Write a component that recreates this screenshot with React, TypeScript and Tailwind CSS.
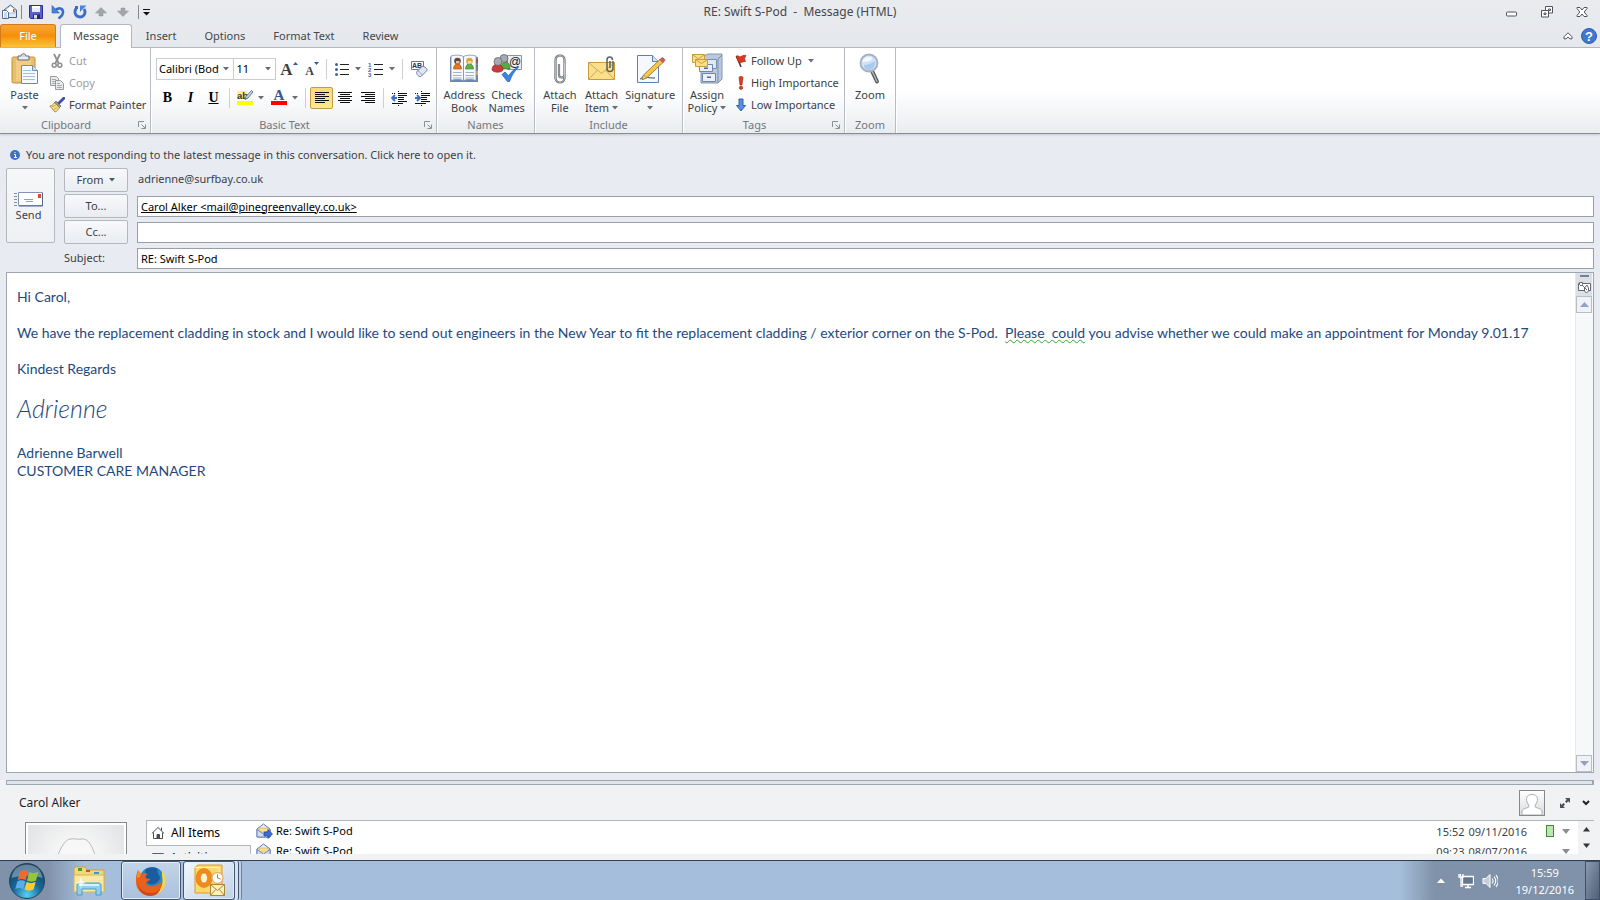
import React, { ReactNode } from "react";

const Caret = ({ className = "text-[#6a6e74]" }: { className?: string }) => (
  <svg width="6" height="4" viewBox="0 0 6 4" className={`shrink-0 ${className}`}>
    <path d="M0 0h6L3 3.5z" fill="currentColor" />
  </svg>
);

/* ---------- Quick access icons ---------- */
const MailDoc = () => (
  <svg width="17" height="16" viewBox="0 0 17 16">
    <path d="M3 6L9.500 1 15.500 6v7.500H3z" fill="#dfe8f4" stroke="#4c5f80" />
    <path d="M5 5l4.500-3L14 5v4H5z" fill="#fff" stroke="#8fa1bd" strokeWidth=".7" />
    <path d="M12 5h1.500v3H12z" fill="#e0532b" />
    <path d="M1.500 6.500h4l2 2v6h-6z" fill="#fff" stroke="#56698b" />
    <path d="M3 9h3M3 11h3M3 13h3" stroke="#7b9cc8" strokeWidth=".8" />
  </svg>
);
const Save = () => (
  <svg width="16" height="16" viewBox="0 0 16 16">
    <path d="M1.500 1.500h13v13h-12l-1-1z" fill="#5a60cc" stroke="#2e2f8d" />
    <path d="M4 2h8v6H4z" fill="#e6ecfa" />
    <path d="M4 2h8v2H4z" fill="#fff" />
    <path d="M5 10.500h7V15H5z" fill="#28286e" />
    <path d="M6 11h3v3.500H6z" fill="#d9ddf0" />
  </svg>
);
const Undo = () => (
  <svg width="16" height="16" viewBox="0 0 16 16">
    <path d="M5 6.500c3-3.500 8-2.500 8 1.500 0 2.500-1.500 4.500-4.500 6.500" fill="none" stroke="#3a6cc8" strokeWidth="2.600" />
    <path d="M2 1.500V9h7.500z" fill="#4b82dc" stroke="#2b5bb4" strokeWidth=".6" />
  </svg>
);
const Redo = () => (
  <svg width="16" height="16" viewBox="0 0 16 16">
    <path d="M4 4.500C1.500 9 4 13 8 13s6.500-4.500 4-8" fill="none" stroke="#3a6cc8" strokeWidth="2.800" />
    <path d="M8 1.500h6.500L8 8z" fill="#4b82dc" />
    <path d="M3 2h3v3H3z" fill="#3a6cc8" />
  </svg>
);
const GreyArrow = ({ down = false }: { down?: boolean }) => (
  <svg width="12" height="10" viewBox="0 0 12 10" className={down ? "rotate-180" : ""}>
    <path d="M6 .5L11.500 6H8v3H4V6H.5z" fill="#a3a5a9" stroke="#8e9196" strokeWidth=".5" />
  </svg>
);

/* ---------- Ribbon icons ---------- */
const PasteIcon = () => (
  <svg width="28" height="32" viewBox="0 0 28 32">
    <rect x="1" y="4" width="23" height="26" rx="1.500" fill="#eabf6c" stroke="#c08e3c" />
    <path d="M5 7h15v21H5z" fill="#f0cc84" />
    <path d="M7 3h3c0-3 5-3 5 0h3v4H7z" fill="#d5d9de" stroke="#6d737b" />
    <path d="M8 5h9" stroke="#fff" />
    <path d="M10.500 12.500h11l5 5v13h-16z" fill="#f6f9fd" stroke="#7188ad" />
    <path d="M21.500 12.500v5h5" fill="#d5e2f2" stroke="#7188ad" />
    <path d="M12 17.500h8M12 20.500h12M12 23.500h12M12 26.500h12" stroke="#a9bdd8" />
  </svg>
);
const CutIcon = () => (
  <svg width="16" height="16" viewBox="0 0 16 16" fill="none" stroke="#8c8e91">
    <path d="M5 1l4.500 9M11 1L6.500 10" strokeWidth="1.800" />
    <circle cx="5.200" cy="12.300" r="2" strokeWidth="1.500" />
    <circle cx="10.800" cy="12.300" r="2" strokeWidth="1.500" />
  </svg>
);
const CopyIcon = () => (
  <svg width="16" height="16" viewBox="0 0 16 16" fill="#e9eaeb" stroke="#97999c">
    <path d="M1.500 1.500h6l2 2v7h-8z" />
    <path d="M3 4.500h4M3 6.500h4M3 8.500h3" strokeWidth=".8" />
    <path d="M6.500 5.500h5l3 3v6h-8z" />
    <path d="M8 8.500h3M8 10.500h5M8 12.500h5" strokeWidth=".8" />
  </svg>
);
const PainterIcon = () => (
  <svg width="16" height="16" viewBox="0 0 16 16">
    <path d="M14.800 1.200L10 6" stroke="#4a49a8" strokeWidth="2.800" strokeLinecap="round" />
    <path d="M7 4l5 5-1.500 1.500-5-5z" fill="#8c93a3" stroke="#4d5462" strokeWidth=".6" />
    <path d="M5.500 5.500l5 5C9 13 8 14.500 6 15L.8 9C3 8.500 4.500 7.500 5.500 5.500z" fill="#f3dc8b" stroke="#9c7b2c" strokeWidth=".8" />
    <path d="M3 10l4-2M5 12.500l3.500-2.500" stroke="#c29d43" strokeWidth=".8" />
  </svg>
);
const Bullets = ({ numbered = false }: { numbered?: boolean }) => (
  <svg width="16" height="15" viewBox="0 0 16 15">
    {numbered ? (
      <g fill="#3d62aa" fontFamily="Liberation Sans, sans-serif" fontSize="6" fontWeight="bold">
        <text x="0" y="4.500">1</text>
        <text x="0" y="9.700">2</text>
        <text x="0" y="15">3</text>
      </g>
    ) : (
      <g fill="#3d62aa">
        <circle cx="2.500" cy="2.500" r="1.500" />
        <circle cx="2.500" cy="7.500" r="1.500" />
        <circle cx="2.500" cy="12.500" r="1.500" />
      </g>
    )}
    <path d="M6 2.500h9M6 7.500h9M6 12.500h9" stroke="#222" />
  </svg>
);
const ClearFormat = () => (
  <svg width="18" height="18" viewBox="0 0 18 18">
    <path d="M1.500 1.500h12v7l-4 1h-8z" fill="#fff" stroke="#6a7991" />
    <text x="2" y="8" fontSize="7" fontWeight="bold" fontFamily="Liberation Sans, sans-serif" fill="#26324b">AB</text>
    <path d="M7 11.500l5-5c1-1 3 .5 4 1.500s1.500 2 .5 3l-5 5c-1 1-2.500.5-3.500-.5s-2-3-1-4z" fill="#dfe6f4" stroke="#6f7fa6" />
    <path d="M7.500 11c2 .5 4 2.500 4.500 4.500" stroke="#9dabca" fill="none" />
  </svg>
);
const Highlight = () => (
  <svg width="16" height="18" viewBox="0 0 16 18">
    <path d="M0 2h10v8H0z" fill="#fbf37c" />
    <path d="M0 12h16v4H0z" fill="#ff0" />
    <text x="0" y="9.500" fontSize="9.500" fontWeight="bold" fontFamily="Liberation Sans, sans-serif" fill="#333">ab</text>
    <path d="M14.500 1.500L16 3l-5 6-3 1.500 1-3z" fill="#c6d6ef" stroke="#55698f" strokeWidth=".9" />
  </svg>
);
const FontColor = () => (
  <svg width="16" height="18" viewBox="0 0 16 18">
    <text x="8" y="11" textAnchor="middle" fontSize="15" fontWeight="bold" fontFamily="Liberation Serif, serif" fill="#34559a">A</text>
    <path d="M0 12h16v4H0z" fill="#f00" />
  </svg>
);
const Align = ({ kind }: { kind: "left" | "center" | "right" }) => {
  const short = { left: "M1", center: "M3", right: "M5" }[kind];
  return (
    <svg width="16" height="14" viewBox="0 0 16 14" stroke="#111">
      <path d="M1 1.500h14M1 5.500h14M1 9.500h14" />
      <path d={`${short} 3.500h10${short} 7.500h10${short} 11.500h10`} />
    </svg>
  );
};
const Indent = ({ out = false }: { out?: boolean }) => (
  <svg width="17" height="15" viewBox="0 0 17 15">
    <path d="M7 2.500h9M8 4.500h8M8 6.500h5M8 8.500h5M8 10.500h8M1 12.500h6M8 12.500h4" stroke="#111" />
    <path d="M1 2.500h4M7.500 0v15" stroke="#111" strokeDasharray="1 1" />
    <path d={out ? "M4 4L1 7l3 3M1 7h5" : "M3 4l3 3-3 3M6 7H1"} fill="none" stroke="#3a6cc8" strokeWidth="1.800" />
  </svg>
);
const AddressBook = () => (
  <svg width="32" height="32" viewBox="0 0 32 32">
    <path d="M2 4h28v25H2z" fill="#6f86ad" />
    <path d="M28 6h2v4h-2z" fill="#c03b3b" />
    <path d="M28 12h2v4h-2z" fill="#4f9b41" />
    <path d="M28 18h2v4h-2z" fill="#e8ad3a" />
    <path d="M3 3c5-1.500 10-1 12.500.5v24C12 26 7 26 3 27.500z" fill="#f7f9fc" stroke="#7b8eae" strokeWidth=".8" />
    <path d="M28 3c-5-1.500-10-1-12.500.5v24C19 26 24 26 28 27.500z" fill="#f7f9fc" stroke="#7b8eae" strokeWidth=".8" />
    <path d="M5.500 16c0-7 8-7 8 0z" fill="#e9761f" stroke="#a04a0d" strokeWidth=".6" />
    <circle cx="9.500" cy="8" r="3.300" fill="#5a4a42" />
    <path d="M8 8h3.500v2.500H8z" fill="#e8bf98" />
    <path d="M17.500 16c0-7 8-7 8 0z" fill="#5eb345" stroke="#33771f" strokeWidth=".6" />
    <circle cx="21.500" cy="8" r="3.300" fill="#d9a83c" />
    <path d="M20 8h3.500v2.500H20z" fill="#f6d6b0" />
    <path d="M5 19.500h8.500M5 22.500h8.500M5 25h8.500M17.500 19.500H26M17.500 22.500H26M17.500 25H26" stroke="#9eb2cf" />
  </svg>
);
const CheckNames = () => (
  <svg width="32" height="32" viewBox="0 0 32 32">
    <path d="M16.500 2.500h14v14h-14z" fill="#e9eff8" stroke="#8294b3" />
    <path d="M10 15c0-8 9-8 9 0v1h-9z" fill="#59aa43" stroke="#2f6f20" strokeWidth=".6" />
    <circle cx="13" cy="5.500" r="4" fill="#a7abb1" stroke="#555a61" strokeWidth=".7" />
    <path d="M1 17c0-8 11-8 11 0-2 3-9 3-11 0z" fill="#c93c3c" stroke="#8b1d1d" strokeWidth=".6" />
    <circle cx="7" cy="8.500" r="4" fill="#a7abb1" stroke="#555a61" strokeWidth=".7" />
    <text x="24" y="13" textAnchor="middle" fontSize="12" fontFamily="Liberation Sans, sans-serif" fill="#222">@</text>
    <path d="M11 21.500l3-2.500 3.500 4C20 19 23 16 27.500 14c-4 4-6.500 8-9 14.500h-2z" fill="#3a86e8" stroke="#1b55a8" strokeWidth=".7" />
  </svg>
);
const Clip = () => (
  <svg width="32" height="32" viewBox="0 0 32 32" fill="none">
    <path d="M20.500 10v15c0 6-9 6-9 0V7c0-6 9-6 9 0v14.500c0 4-5.500 4-5.500 0V11" stroke="#666b72" strokeWidth="2.200" />
    <path d="M20.500 10v15c0 6-9 6-9 0V7c0-6 9-6 9 0v14.500c0 4-5.500 4-5.500 0V11" stroke="#cfd3d8" strokeWidth=".7" />
  </svg>
);
const AttachItem = () => (
  <svg width="32" height="32" viewBox="0 0 32 32">
    <path d="M2.500 9.500h26v17h-26z" fill="#fbe08b" stroke="#c79a3a" />
    <path d="M3 26l8.500-9M28 26l-8.500-9M3 10l12.500 10.500L28 10" fill="none" stroke="#d3a850" />
    <path d="M27 8v7.500c0 4-6 4-6 0V7c0-4 5.500-4 5.500 0" fill="none" stroke="#5b6067" strokeWidth="1.500" />
    <path d="M24 8v7" stroke="#5b6067" strokeWidth="1.500" />
  </svg>
);
const Signature = () => (
  <svg width="32" height="32" viewBox="0 0 32 32">
    <path d="M3.500 2.500h15l6 6v21h-21z" fill="#f5f9fd" stroke="#5f7fae" />
    <path d="M18.500 2.500v6h6" fill="#d3e1f3" stroke="#5f7fae" />
    <path d="M6 26c3-1 3-4 5-3s2 2 10 2" fill="none" stroke="#33415c" />
    <path d="M26 6.500l3 3-16.500 15.500-4.500 1.500 1.500-4.500z" fill="#f8c74d" stroke="#8f6a1c" strokeWidth=".8" />
    <path d="M9.500 22l3 3-4.500 1.500z" fill="#f3ddb5" stroke="#6b5320" strokeWidth=".5" />
    <path d="M26 6.500l1.500-1.500c1-1 4.500 1.500 3 3L29 9.500z" fill="#d9566a" stroke="#8b3540" strokeWidth=".6" />
  </svg>
);
const Policy = () => (
  <svg width="32" height="32" viewBox="0 0 32 32">
    <path d="M13 3l4-2h14v25l-4 4H10V3z" fill="#b9c8dc" stroke="#8496b1" />
    <path d="M27 6l4-4M27 6v24" stroke="#7c90ae" />
    <path d="M14.500 6.500h11v9h-11z" fill="#dfe8f3" stroke="#7b8ead" />
    <path d="M8.500 11.500h13v7h-13z" fill="#e9f0f8" stroke="#7186aa" />
    <path d="M11.500 20.500h13v8h-13z" fill="#e9f0f8" stroke="#7186aa" />
    <path d="M13 14.500h4v1.500h-4zM16 23.500h4V25h-4z" fill="#54698c" />
    <path d="M1.500 1.500h12v8h-12z" fill="#fbdf86" stroke="#c79d40" />
    <path d="M1.500 1.500l6 4.500 6-4.500" fill="none" stroke="#c79d40" />
    <path d="M4.500 6.500h12v7h-12z" fill="#fbdf86" stroke="#c79d40" />
    <path d="M4.500 6.500l6 4 6-4" fill="none" stroke="#c79d40" />
  </svg>
);
const ZoomIcon = () => (
  <svg width="32" height="32" viewBox="0 0 32 32">
    <path d="M18.500 19l4.500 9.500" stroke="#55595f" strokeWidth="4" strokeLinecap="round" />
    <path d="M18.500 19l4.500 9.500" stroke="#b7bbc0" strokeWidth="1.300" strokeLinecap="round" />
    <circle cx="15" cy="10" r="8.500" fill="#cfe2f8" stroke="#a5afbe" strokeWidth="1.800" />
    <path d="M8.500 9C9 4.500 14 2.500 18 4.500c1 4-5 4-9.500 4.500z" fill="#f3f9ff" />
    <path d="M10 12c4 0 8-2 11-4 1 5-3 9-6 9s-5-2-5-5z" fill="#a9c9ef" />
  </svg>
);
const Flag = () => (
  <svg width="12" height="14" viewBox="0 0 12 14">
    <path d="M1.500 2l4.500 11" stroke="#333" strokeWidth="1.500" />
    <path d="M1 2.500c2-2 3 1 5 0s3-1.500 5-1l-1.500 3 1 3C8 7 7 9 4 9z" fill="#dc3a20" stroke="#8e1d0d" strokeWidth=".6" />
  </svg>
);
const Bang = () => (
  <svg width="12" height="14" viewBox="0 0 12 14" fill="#df3f20" stroke="#99210c" strokeWidth=".6">
    <path d="M4 1.500C4 0 8 0 8 1.500L7 9H5z" />
    <circle cx="6" cy="11.700" r="1.700" />
  </svg>
);
const LowArrow = () => (
  <svg width="12" height="14" viewBox="0 0 12 14">
    <path d="M4 1h4v6.500h2.500L6 13 1.500 7.500H4z" fill="#5b8fe6" stroke="#2851a3" strokeWidth=".9" />
  </svg>
);
const Launcher = () => (
  <svg width="8" height="8" viewBox="0 0 8 8" fill="none" stroke="#8b8f95">
    <path d="M.5 6V.5H6M3.500 3.500L7 7M7.500 3.500v4h-4" />
  </svg>
);

/* ---------- Ribbon parts ---------- */
function Group({ label, launcher, children, className = "" }: { label: string; launcher?: boolean; children: ReactNode; className?: string }) {
  return (
    <section aria-label={label} className="flex shrink-0 flex-col border-r border-[#b9bdc3] shadow-[1px_0_0_#fff]">
      <div className={`flex h-[69px] ${className}`}>{children}</div>
      <div className={`relative h-4 text-center leading-4 text-[#73777e] ${launcher ? "pr-[18px]" : ""}`}>
        {label}
        {launcher && (
          <button aria-label={`${label} options`} className="absolute right-1 top-1">
            <Launcher />
          </button>
        )}
      </div>
    </section>
  );
}

function Big({ icon, lines, caret, className }: { icon: ReactNode; lines: string[]; caret?: boolean; className: string }) {
  return (
    <button className={`flex flex-col items-center pt-1 leading-[13px] ${className}`}>
      <span className="mb-1 flex h-8 items-center pt-px">{icon}</span>
      <span>{lines[0]}</span>
      <span className="flex h-[13px] items-center gap-[3px]">
        {lines[1]}
        {caret && <Caret />}
      </span>
    </button>
  );
}

function Small({ icon, text, muted, caret }: { icon: ReactNode; text: string; muted?: boolean; caret?: boolean }) {
  return (
    <button className={`flex h-[22px] items-center gap-1 whitespace-nowrap ${muted ? "text-[#9b9da1]" : ""}`}>
      {icon}
      <span>{text}</span>
      {caret && <Caret className="ml-[2px] text-[#6a6e74]" />}
    </button>
  );
}

const Sep = () => <span className="h-5 w-px shrink-0 bg-[#ccd0d5]" />;

function Tool({ label, className = "w-[22px]", children }: { label: string; className?: string; children: ReactNode }) {
  return (
    <button aria-label={label} className={`flex h-[22px] shrink-0 items-center justify-center ${className}`}>
      {children}
    </button>
  );
}

function Combo({ label, value, className }: { label: string; value: string; className: string }) {
  return (
    <span className={`relative flex h-[22px] items-center border border-[#c9ccd1] bg-white ${className}`}>
      <select aria-label={label} defaultValue={value} className="h-full w-full appearance-none overflow-hidden pl-[2px] pr-3 text-clip text-black outline-none">
        <option>{value}</option>
      </select>
      <span className="pointer-events-none absolute right-0 flex h-full w-[14px] items-center justify-center bg-white">
        <Caret />
      </span>
    </span>
  );
}

function Ribbon() {
  return (
    <div className="flex h-[86px] overflow-hidden border-b border-[#8a8e94] bg-linear-to-b from-white from-50% to-[#e9ecef] text-[#3b3f46] shadow-[0_1px_2px_#c4c8ce]">
      <Group label="Clipboard" launcher className="w-[150px]">
        <Big icon={<PasteIcon />} lines={["Paste", ""]} caret className="w-[49px]" />
        <div className="flex flex-col pt-[2px]">
          <Small icon={<CutIcon />} text="Cut" muted />
          <Small icon={<CopyIcon />} text="Copy" muted />
          <Small icon={<PainterIcon />} text="Format Painter" />
        </div>
      </Group>

      <Group label="Basic Text" launcher className="w-[285px] flex-col gap-[7px] px-[5px] pt-[10px]">
        <div className="flex items-center">
          <Combo label="Font" value="Calibri (Body)" className="w-[81px]" />
          <Combo label="Font size" value="11" className="-ml-px w-[44px]" />
          <Tool label="Grow font" className="w-[26px]">
            <span className="font-['Liberation_Serif',serif] text-[17px] font-bold leading-none">A</span>
            <svg width="5" height="3" viewBox="0 0 5 3" className="mb-3"><path d="M0 3h5L2.500 0z" fill="#3257a2" /></svg>
          </Tool>
          <Tool label="Shrink font" className="mr-1 w-[20px]">
            <span className="pt-1 font-['Liberation_Serif',serif] text-[12px] font-bold leading-none">A</span>
            <svg width="5" height="3" viewBox="0 0 5 3" className="mb-3"><path d="M0 0h5L2.500 3z" fill="#3257a2" /></svg>
          </Tool>
          <Sep />
          <Tool label="Bullets" className="w-[37px] gap-[5px] pl-1"><Bullets /><Caret /></Tool>
          <Tool label="Numbering" className="mr-1 w-[34px] gap-[5px]"><Bullets numbered /><Caret /></Tool>
          <Sep />
          <Tool label="Clear formatting" className="ml-1 w-[24px]"><ClearFormat /></Tool>
        </div>
        <div className="flex items-center font-normal text-black">
          <Tool label="Bold" className="w-[23px]"><b className="font-['Liberation_Serif',serif] text-[14px]">B</b></Tool>
          <Tool label="Italic" className="w-[23px]"><i className="font-['Liberation_Serif',serif] text-[14px] font-bold">I</i></Tool>
          <Tool label="Underline" className="mr-1 w-[23px]"><u className="font-['Liberation_Serif',serif] text-[14px] font-bold">U</u></Tool>
          <Sep />
          <Tool label="Highlight colour" className="w-[37px] gap-[5px] pl-1"><Highlight /><Caret /></Tool>
          <Tool label="Font colour" className="mr-1 w-[34px] gap-[5px]"><FontColor /><Caret /></Tool>
          <Sep />
          <Tool label="Align left" className="ml-1 w-[23px] rounded-xs border border-[#c29b4b] bg-linear-to-b from-[#fbd983] to-[#fde98d]"><Align kind="left" /></Tool>
          <Tool label="Align centre" className="w-[23px]"><Align kind="center" /></Tool>
          <Tool label="Align right" className="mr-1 w-[23px]"><Align kind="right" /></Tool>
          <Sep />
          <Tool label="Decrease indent" className="ml-1 w-[23px]"><Indent out /></Tool>
          <Tool label="Increase indent"><Indent /></Tool>
        </div>
      </Group>

      <Group label="Names" className="w-[97px] px-[6px]">
        <Big icon={<AddressBook />} lines={["Address", "Book"]} className="w-[43px]" />
        <Big icon={<CheckNames />} lines={["Check", "Names"]} className="w-[43px]" />
      </Group>

      <Group label="Include" className="w-[147px] px-[5px]">
        <Big icon={<Clip />} lines={["Attach", "File"]} className="w-[40px]" />
        <Big icon={<AttachItem />} lines={["Attach", "Item"]} caret className="w-[44px]" />
        <Big icon={<Signature />} lines={["Signature", ""]} caret className="w-[54px]" />
      </Group>

      <Group label="Tags" launcher className="w-[161px] px-[2px]">
        <Big icon={<Policy />} lines={["Assign", "Policy"]} caret className="w-[44px]" />
        <div className="flex flex-col pl-[6px] pt-[2px]">
          <Small icon={<Flag />} text="Follow Up" caret />
          <Small icon={<Bang />} text="High Importance" />
          <Small icon={<LowArrow />} text="Low Importance" />
        </div>
      </Group>

      <Group label="Zoom" className="w-[50px] justify-center">
        <Big icon={<ZoomIcon />} lines={["Zoom", ""]} className="w-[44px]" />
      </Group>
    </div>
  );
}

function TitleBar() {
  return (
    <header className="grid h-6 grid-cols-[1fr_auto_1fr] items-center">
      <div className="flex items-center">
        <span className="w-[21px] pl-px"><MailDoc /></span>
        <span className="h-[14px] w-px bg-[#85888d]" />
        <button aria-label="Save" className="ml-[6px] w-[22px]"><Save /></button>
        <button aria-label="Undo" className="w-[22px]"><Undo /></button>
        <button aria-label="Redo" className="w-[23px]"><Redo /></button>
        <button aria-label="Previous item" className="w-[22px]"><GreyArrow /></button>
        <button aria-label="Next item" className="w-[21px]"><GreyArrow down /></button>
        <span className="h-[14px] w-px bg-[#85888d]" />
        <button aria-label="Customise toolbar" className="ml-1">
          <svg width="7" height="7" viewBox="0 0 7 7"><path d="M0 .5h7" stroke="#111" /><path d="M0 3h7L3.500 6.500z" fill="#111" /></svg>
        </button>
      </div>
      <h1 className="whitespace-pre text-[12px] text-[#44474c]">RE: Swift S-Pod  -  Message (HTML)</h1>
      <div className="flex items-center justify-end gap-[23px] pb-px pr-3">
        <button aria-label="Minimise">
          <svg width="12" height="12" viewBox="0 0 12 12"><rect x=".5" y="6" width="10" height="4" rx="1" fill="#fff" stroke="#50545e" /></svg>
        </button>
        <button aria-label="Restore">
          <svg width="12" height="12" viewBox="0 0 12 12" fill="#fff" stroke="#50545e"><path d="M4.500.5h7v6.500h-7zM7.500 3h2v1.500h-2z" /><path d="M.5 4.500h7V11h-7zM3 7h2v1.500H3z" /></svg>
        </button>
        <button aria-label="Close">
          <svg width="12" height="12" viewBox="0 0 12 12"><path d="M1 1.500h3L6 4l2-2.500h3v1L8.200 6 11 9.500v1H8L6 8l-2 2.500H1v-1L3.800 6 1 2.500z" fill="#fff" stroke="#50545e" /></svg>
        </button>
      </div>
    </header>
  );
}

function Tabs() {
  return (
    <nav className="flex h-6 items-stretch border-b border-[#b3b8be] text-[#44474c]">
      <button className="mr-1 w-[56px] rounded-t-[3px] border border-b-0 border-[#d27a1c] bg-linear-to-b from-[#f9a533] via-[#f59000] to-[#ffc23c] text-white">File</button>
      <button className="-mb-px rounded-t-[3px] border border-b-0 border-[#b3b8be] bg-white px-3 pb-[2px]">Message</button>
      {["Insert", "Options", "Format Text", "Review"].map((t) => (
        <button key={t} className="px-[14px]">{t}</button>
      ))}
      <span className="grow" />
      <button aria-label="Collapse ribbon" className="mr-2">
        <svg width="10" height="8" viewBox="0 0 10 8"><path d="M5 .8l4 4v2H7L5 5 3 6.800H1v-2z" fill="#fff" stroke="#50545e" /></svg>
      </button>
      <button aria-label="Help" className="mr-[3px]">
        <svg width="16" height="16" viewBox="0 0 16 16">
          <circle cx="8" cy="8" r="7.500" fill="#3f78d2" stroke="#2d5dab" />
          <text x="8" y="12.500" textAnchor="middle" fontSize="13" fontWeight="bold" fontFamily="Liberation Sans, sans-serif" fill="#fff">?</text>
        </svg>
      </button>
    </nav>
  );
}

const headBtn = "flex h-6 items-center justify-center gap-[6px] rounded-xs border border-[#b4b8be] bg-linear-to-b from-[#f8f9fb] to-[#e9ecf0]";
const field = "mt-[2px] h-[21px] w-full border border-[#9b9ea4] bg-white px-[3px] pb-px text-black outline-none";

function Headers() {
  return (
    <div className="px-[6px] pt-[11px]">
      <button className="flex h-5 items-center gap-[6px] pl-1">
        <svg width="10" height="10" viewBox="0 0 10 10"><circle cx="5" cy="5" r="5" fill="#4470c4" /><path d="M4 4.500h1.500V7.500M4 7.500h3M4.500 2.500h1" stroke="#fff" fill="none" /></svg>
        You are not responding to the latest message in this conversation. Click here to open it.
      </button>
      <div className="mt-[3px] flex">
        <button className="flex h-[75px] w-[49px] shrink-0 flex-col items-center justify-center rounded-xs border border-[#b4b8be] bg-linear-to-b from-[#f6f7f9] to-[#eef0f3] pr-1">
          <svg width="30" height="15" viewBox="0 0 30 15" className="mt-1">
            <path d="M0 1.500h3M0 4.500h3M0 7.500h3M0 10.500h3M0 13.500h3" stroke="#7d90b3" />
            <path d="M4.500.5h24v13h-24z" fill="#fff" stroke="#8194b5" />
            <path d="M28.500 1v13H5" fill="none" stroke="#52658a" />
            <path d="M10 7.500h9M12 9.500h7" stroke="#8ca0c4" />
            <path d="M24 2h3v4h-3z" fill="#dc4a2b" />
          </svg>
          Send
        </button>
        <div className="ml-[9px] grid grow grid-cols-[64px_1fr] gap-x-[9px] gap-y-[2px]">
          <button className={headBtn}>From <Caret className="text-[#4b5872]" /></button>
          <span className="pl-px leading-[22px]">adrienne@surfbay.co.uk</span>
          <button id="to-label" className={headBtn}>To...</button>
          <input aria-labelledby="to-label" defaultValue="Carol Alker <mail@pinegreenvalley.co.uk>" className={`underline ${field}`} />
          <button id="cc-label" className={headBtn}>Cc...</button>
          <input aria-labelledby="cc-label" className={field} />
          <label htmlFor="subject" className="leading-6">Subject:</label>
          <input id="subject" defaultValue="RE: Swift S-Pod" className={field} />
        </div>
      </div>
    </div>
  );
}

function ScrollBtn({ down = false }: { down?: boolean }) {
  return (
    <button aria-label={down ? "Scroll down" : "Scroll up"} className="flex h-[17px] w-full items-center justify-center border border-[#b9bdc5] bg-[#f1f2f5]">
      <svg width="9" height="5" viewBox="0 0 9 5" className={down ? "rotate-180" : ""}><path d="M0 5h9L4.500 0z" fill="#93a1c9" /></svg>
    </button>
  );
}

function Editor() {
  return (
    <main className="mx-[6px] mt-[2px] flex min-h-0 grow border border-[#9ea6b3] bg-white">
      <div contentEditable suppressContentEditableWarning aria-label="Message body" role="textbox" className="grow overflow-hidden pl-[10px] pt-[15px] font-[Lato,sans-serif] text-[14px] leading-[18px] text-[#1f497d] outline-none">
        <p className="mb-[18px]">Hi Carol,</p>
        <p className="mb-[18px]">
          We have the replacement cladding in stock and I would like to send out engineers in the New Year to fit the replacement cladding / exterior corner on the S-Pod.&nbsp;{" "}
          <span className="underline decoration-[#3aa23a] decoration-wavy decoration-1 underline-offset-1">Please&nbsp; could</span> you advise whether we could make an appointment for Monday 9.01.17
        </p>
        <p>Kindest Regards</p>
        <p className="my-[14px] text-[25px] font-light italic leading-8">Adrienne</p>
        <p className="pt-[6px]">Adrienne Barwell</p>
        <p>CUSTOMER CARE MANAGER</p>
      </div>
      <div className="flex w-[18px] shrink-0 flex-col border-l border-[#e6e8eb] bg-[#f7f8f9] pr-px">
        <div className="flex h-[23px] flex-col items-center gap-1 bg-[#dae0e8] pt-[2px]">
          <span className="h-[2px] w-[9px] bg-[#7c8086]" />
          <svg width="13" height="13" viewBox="0 0 13 13" fill="#fff" stroke="#65686e"><path d="M.5 2.500h12v7H.5z" /><path d="M1.500 1.500h3v2L3 5 1.500 3.500zM4 4l5 5M9 4L6.500 7v3l2 2 2-2V7z" /></svg>
        </div>
        <ScrollBtn />
        <span className="grow" />
        <ScrollBtn down />
      </div>
    </main>
  );
}

const Mail = ({ arrow = false }: { arrow?: boolean }) => (
  <svg width="17" height="16" viewBox="0 0 17 16" className="shrink-0">
    <path d="M1 6l6.500-5L14 6v8H1z" fill="#e8eef8" stroke="#5b76ab" />
    <path d="M3 5h9v4H3z" fill="#fbe08b" stroke="#d4a94b" strokeWidth=".6" />
    <path d="M1 6.500l6.500 4.500L14 6.500V14H1z" fill="#cddcf1" stroke="#5b76ab" strokeWidth=".8" />
    {arrow && <path d="M8 9h4V6.500l4.500 4.500-4.500 4.500V13H8z" fill="#3d6fd0" stroke="#23468f" strokeWidth=".7" />}
  </svg>
);

const Person = () => (
  <svg width="24" height="24" viewBox="0 0 24 24">
    <path d="M2 24v-3c0-3 3-3.500 6-4.500 1.500-.5 1-2 0-3.500-3-5-1.500-9.500 4-9.500s7 4.500 4 9.500c-1 1.500-1.500 3 0 3.500 3 1 6 1.500 6 4.500v3z" fill="#fff" stroke="#aaadb1" />
  </svg>
);

function PeoplePane() {
  const rows = [
    { time: "15:52", date: "09/11/2016", box: true },
    { time: "09:23", date: "08/07/2016", box: false },
  ];
  return (
    <section aria-label="People" className="mt-[7px] shrink-0 bg-[#f1f2f4] px-[6px] pb-[6px]">
      <div className="h-[5px] border border-r-2 border-[#9ea6b3] bg-[#dfe3ea]" />
      <div className="flex h-[35px] items-center pl-[13px] pr-1 text-[12px] text-[#1d1d1f]">
        <span className="grow pt-px">Carol Alker</span>
        <span className="mr-[14px] flex h-[26px] w-[26px] items-center justify-center border border-[#85888c] bg-linear-to-b from-white to-[#d9dbde]"><Person /></span>
        <button aria-label="Expand" className="mr-[11px]">
          <svg width="12" height="12" viewBox="0 0 12 12" fill="#4d5055"><path d="M6 1h5v5L9.300 4.300 7.500 6 6 4.500l1.700-1.800zM6 11H1V6l1.700 1.700L4.500 6 6 7.500 4.300 9.300z" /></svg>
        </button>
        <button aria-label="Collapse pane">
          <svg width="8" height="6" viewBox="0 0 8 6"><path d="M1 1l3 3 3-3" fill="none" stroke="#222" strokeWidth="2" /></svg>
        </button>
      </div>
      <div className="flex h-[34px] overflow-hidden text-black">
        <div className="ml-[19px] mt-[2px] h-[120px] w-[102px] shrink-0 border border-[#85888c] bg-white p-[2px]">
          <div className="flex h-full justify-center bg-[radial-gradient(circle_at_50%_30%,#fff,#cfd1d3)] pt-3">
            <svg width="50" height="30" viewBox="0 0 50 30"><path d="M3 30C8 12 14 2 20 2c3-1 8 1 11 0 8-1 12 12 17 28z" fill="#f7f7f8" stroke="#b4b6b9" /></svg>
          </div>
        </div>
        <div className="ml-[19px] w-[105px] shrink-0 text-[12px]">
          <button className="flex h-[25px] w-full items-center gap-[6px] border-l border-t border-[#b4b7bc] bg-white pl-1">
            <svg width="14" height="14" viewBox="0 0 14 14" fill="none" stroke="#4b4e53"><path d="M.8 7.500L7 1.500l6.200 6M2.500 6.500v6h9v-6M10.500 1.500v3" /><path d="M6 8.500h2.500V12H6z" fill="#4b4e53" /></svg>
            All Items
          </button>
          <button className="flex h-6 w-full items-center gap-[6px] border-r border-t border-[#b4b7bc] pl-[6px]">
            <svg width="12" height="12" viewBox="0 0 12 12"><path d="M.5 1.500h11v9H.5z" fill="#fff" stroke="#5c5f64" /></svg>
            Activities
          </button>
        </div>
        <ul className="grow border-t border-[#b4b7bc] bg-white">
          {rows.map((r) => (
            <li key={r.time} className="flex h-[20px] items-center pl-[5px]">
              <Mail arrow={r.box} />
              <a href="#message" className="ml-[3px] grow">Re: Swift S-Pod</a>
              <span className="mr-[19px] flex gap-1 pt-[2px] text-[#3b3f46]"><span>{r.time}</span><span>{r.date}</span></span>
              <span className={`mr-2 h-3 w-2 border ${r.box ? "border-[#3f8a36] bg-[#bfe5b5]" : "border-transparent"}`} />
              <button aria-label="More" className="mr-2">
                <svg width="8" height="5" viewBox="0 0 8 5"><path d="M0 0h8L4 5z" fill="#8a8d92" /></svg>
              </button>
            </li>
          ))}
        </ul>
        <div className="flex w-4 shrink-0 flex-col items-center gap-[11px] border-t border-[#b4b7bc] bg-[#f1f2f4] pt-[6px]">
          <svg width="7" height="5" viewBox="0 0 7 5"><path d="M0 4.500h7L3.500 0z" fill="#333" /></svg>
          <svg width="7" height="5" viewBox="0 0 7 5"><path d="M0 .5h7L3.500 5z" fill="#333" /></svg>
        </div>
      </div>
    </section>
  );
}

/* ---------- Taskbar ---------- */
const Orb = () => (
  <svg width="38" height="38" viewBox="0 0 38 38">
    <defs>
      <radialGradient id="orb" cx=".5" cy=".9" r=".9"><stop offset="0" stopColor="#58d3f2" /><stop offset=".45" stopColor="#17699c" /><stop offset="1" stopColor="#123a5c" /></radialGradient>
    </defs>
    <circle cx="19" cy="19" r="17.500" fill="url(#orb)" stroke="#27455f" />
    <path d="M3.500 16C5 6 12 2.500 19 2.500S33 6 34.500 16c-9-3-22-3-31 0z" fill="#fff" opacity=".35" />
    <path d="M12 9.500c3-2 5.500-1.500 8 0l-2.300 8.500c-3-1.500-5-1.500-8 0z" fill="#ee6c30" />
    <path d="M21.300 10c3 1.500 5.500 1.500 9 0l-2.300 8.500c-3 1.500-5.500 1.500-9 0z" fill="#9ac53b" />
    <path d="M9.300 19.500c3-2 5.500-1.500 8 0L15.200 27c-3-1.500-5-1.500-8 0z" fill="#5cabea" />
    <path d="M18.700 20c3 1.500 5.500 1.500 9 0l-2.200 7.500c-3 1.500-5.500 1.500-9 0z" fill="#fccb3c" />
  </svg>
);
const Explorer = () => (
  <svg width="34" height="32" viewBox="0 0 34 32">
    <path d="M2 4c0-2 2-2 3-2h8l2 3h17v21H2z" fill="#f2d878" stroke="#c9a544" />
    <path d="M6 3h4v3H6z" fill="#3da63a" />
    <path d="M14 5h4v2h-4z" fill="#d84d2a" />
    <path d="M22 7h5v2h-5z" fill="#4294d8" />
    <path d="M2 10h30v17H2z" fill="#fae9a4" stroke="#d7b75c" />
    <path d="M5 30V20c0-1 1-2 2-2h20c1 0 2 1 2 2v10h-5v-6H10v6z" fill="#8fd0ee" stroke="#4b9cc6" />
    <path d="M7 20h20" stroke="#d9f2fc" strokeWidth="2" />
    <path d="M9 11l1 5 4 2-4 1-1 5-1-5-4-1 4-2z" fill="#fff" opacity=".8" />
  </svg>
);
const Firefox = () => (
  <svg width="32" height="32" viewBox="0 0 32 32">
    <circle cx="17" cy="14.500" r="12.500" fill="#2487c9" />
    <path d="M10 5c4-3 9-3 13-1-2 3 1 5 2 9-2 6-8 8-13 5z" fill="#1a5d9e" />
    <path d="M27 6c4 4 4.500 12 1.500 17-2 4-6 7-11 7 6-3 10-8 10-14 0-4-1-6-.5-10z" fill="#fbd543" />
    <path d="M3 5l3 4c2-1 5-1 7 0-2 1-3 2-3 4l5 1c0 2-3 2-4 4 1 4 8 4 12 1 2 0 3-2 4-3 0 7-3 13-11 14.500C7 31.500 1 24 1 17c0-4 0-8 2-12z" fill="#e7601c" />
    <path d="M2.500 18c2 7 8 10 14 10 4 0 7-2 9-5-1 5-5 8-10 8C8 31 3 25 2.500 18z" fill="#cf4a1b" />
    <path d="M3 5l3 4-2 4-2-1z" fill="#f58f2c" />
  </svg>
);
const Outlook = () => (
  <svg width="34" height="34" viewBox="0 0 34 34">
    <path d="M3 3.500L6 1h24v24l-3 4H3z" fill="#fbd96c" stroke="#e0992a" />
    <path d="M3 3.500h24V29" fill="none" stroke="#fff0b4" />
    <ellipse cx="12" cy="14" rx="6" ry="7.500" fill="#fff" stroke="#f08a1c" strokeWidth="5" />
    <ellipse cx="12" cy="14" rx="3.500" ry="5" fill="#fff3c9" stroke="#c9660c" strokeWidth=".6" />
    <circle cx="25.500" cy="14" r="5.500" fill="#fff" stroke="#e6b15f" strokeWidth="1.300" />
    <path d="M25.500 10.500V14l3 1" fill="none" stroke="#c4701c" />
    <path d="M18.500 20.500h14v11h-14z" fill="#fcefb8" stroke="#a9883a" />
    <path d="M18.500 20.500l7 6 7-6M18.500 31.500l5-6M32.500 31.500l-5-6" fill="none" stroke="#a9883a" />
  </svg>
);

function Taskbar() {
  const task = "flex items-center justify-center rounded-[3px] border border-[#45566d] shadow-[inset_0_0_0_1px_#e3edf8]";
  return (
    <footer className="flex h-10 shrink-0 border-t border-[#2f3f52] bg-[#a5bedb] bg-[linear-gradient(90deg,#8092a9_0,#8092a9_48px,#a5bedb_84px,#a5bedb_calc(100%_-_200px),#8092a9_calc(100%_-_166px),#8092a9_100%)]">
      <button aria-label="Start" className="flex w-[54px] items-center justify-center"><Orb /></button>
      <button aria-label="Windows Explorer" className="flex w-[67px] items-center justify-center pl-[3px]"><Explorer /></button>
      <button aria-label="Firefox" className={`w-[60px] bg-linear-to-b from-[#c3d4e8] to-[#a9c0dc] ${task}`}><Firefox /></button>
      <button aria-label="Outlook" className={`ml-[2px] w-[52px] bg-linear-to-br from-[#f4f8fc] to-[#c0d2e8] ${task}`}><Outlook /></button>
      <span className="w-1 rounded-r-xs border-r border-[#45566d] bg-[#d5e2f1]" />
      <span className="w-[3px] rounded-r-xs border-r border-[#6f859f] bg-[#c0d1e6]" />
      <span className="grow" />
      <div className="flex items-center text-white">
        <button aria-label="Show hidden icons" className="mr-[13px]">
          <svg width="8" height="5" viewBox="0 0 8 5"><path d="M0 5h8L4 .5z" fill="#fff" /></svg>
        </button>
        <svg width="16" height="16" viewBox="0 0 16 16" fill="none" className="mr-2">
          <path d="M4.500 3.500h11v8h-11z" fill="#64768d" stroke="#fff" strokeWidth="1.300" />
          <path d="M10 12v2M7 14.500h6" stroke="#fff" strokeWidth="1.500" />
          <path d="M1 1v3h4V1M3 4v9h2M2.500 1v2" stroke="#fff" strokeWidth="1.300" />
        </svg>
        <svg width="16" height="16" viewBox="0 0 16 16" fill="none" stroke="#fff" className="mr-[17px]">
          <path d="M1 5.500h3l4-4v13l-4-4H1z" fill="#c4cdd8" />
          <path d="M10 5.500c1.300 1.500 1.300 3.500 0 5M12 3.500c2.300 3 2.300 6 0 9M14 2c3 4 3 8 0 12" strokeWidth="1.100" />
        </svg>
        <div className="mr-[11px] text-center leading-[17px]">
          <div>15:59</div>
          <div>19/12/2016</div>
        </div>
        <button aria-label="Show desktop" className="h-full w-[15px] border border-[#3f5068] bg-linear-to-br from-[#8b9bb0] to-[#4f6178]" />
      </div>
    </footer>
  );
}

export default function App() {
  return (
    <div className="flex h-screen flex-col overflow-hidden bg-[#e8ebf1] font-['Noto_Sans',sans-serif] text-[11px] leading-4 text-[#3b3f46]">
      <div className="shrink-0 bg-linear-to-b from-[#e9ebef] to-[#dfe3e6]">
        <TitleBar />
        <Tabs />
        <Ribbon />
      </div>
      <Headers />
      <Editor />
      <PeoplePane />
      <Taskbar />
    </div>
  );
}
